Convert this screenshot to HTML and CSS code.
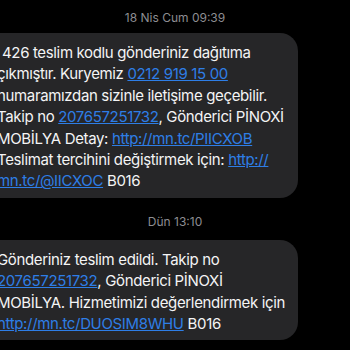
FILE: index.html
```html
<!DOCTYPE html>
<html lang="tr">

<head>
    <meta charset="UTF-8">
    <meta name="viewport" content="width=device-width, initial-scale=1.0">
    <title>Mesajlar</title>

    <link rel="stylesheet" href="styles.css">

</head>

<body>

    <div class="thread">
        <div class="stamp">18 Nis Cum 09:39</div>

        <div class="bubble">
            <p class="first">426 teslim kodlu gönderiniz dağıtıma<br>
            çıkmıştır. Kuryemiz <a href="#">0212 919 15 00</a><br>
            numaramızdan sizinle iletişime geçebilir.<br>
            Takip no <a href="#">207657251732</a>, Gönderici PİNOXİ<br>
            MOBİLYA Detay: <a href="#">http://mn.tc/PIICXOB</a><br>
            Teslimat tercihini değiştirmek için: <a href="#">http://<br>
            mn.tc/@IICXOC</a> B016</p>
        </div>

        <div class="stamp">Dün 13:10</div>

        <div class="bubble">
            <p>Gönderiniz teslim edildi. Takip no<br>
            <a href="#">207657251732</a>, Gönderici PİNOXİ<br>
            MOBİLYA. Hizmetimizi değerlendirmek için<br>
            <a href="#">http://mn.tc/DUOSIM8WHU</a> B016</p>
        </div>
    </div>

</body>

</html>
```

FILE: styles.css
```css
body {
    background-color: #000;
    margin: 0;
    font-family: Inter, "Noto Sans", sans-serif;
    overflow: hidden;
}

.thread {
    display: flex;
    flex-direction: column;
    width: 350px;
}

.stamp {
    color: #8d8d92;
    font-size: 12px;
    text-align: center;
    padding-top: 10px;
    height: 23px;
}

.bubble {
    background-color: #262628;
    border-radius: 18px;
    margin-left: -20px;
    width: 318px;
    padding: 9px 0 6px 17px;
    box-sizing: border-box;
}

.bubble p {
    margin: 0;
    color: #f4f4f5;
    font-size: 15px;
    letter-spacing: -0.35px;
    line-height: 21.4px;
    white-space: nowrap;
}

.bubble p.first {
    text-indent: 5px;
}

.bubble a {
    color: #2e7ee6;
    text-decoration: underline;
}

.thread .stamp + .bubble + .stamp {
    padding-top: 16px;
    height: 26px;
}
```
